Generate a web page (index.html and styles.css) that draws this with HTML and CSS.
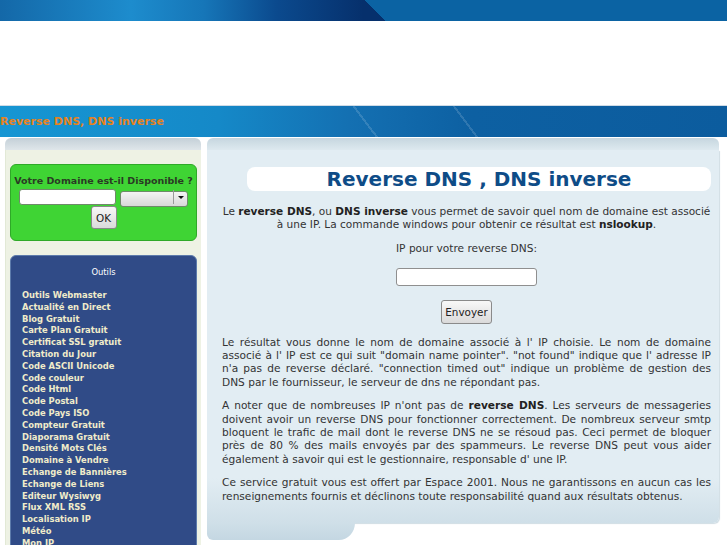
FILE: index.html
```html
<!DOCTYPE html>
<html lang="fr">
<head>
  <meta charset="UTF-8">
  <meta name="viewport" content="width=device-width, initial-scale=1.0">
  <title>Reverse DNS, DNS inverse</title>
  <link rel="stylesheet" href="styles.css">
</head>
<body>
  <div class="top-banner"></div>
  <div class="logo-area"></div>

  <div class="nav-bar">
    <h1 class="nav-title">Reverse DNS, DNS inverse</h1>
  </div>

  <div class="page">
    <!-- colonne de gauche -->
    <aside class="sidebar">
      <div class="panel-head"></div>
      <div class="sidebar-body">
        <form class="domain-box">
          <div class="domain-title">Votre Domaine est-il Disponible ?</div>
          <div class="domain-row">
            <input type="text" class="domain-input">
            <span class="select-wrap">
              <select class="domain-select"></select>
              <span class="select-arrow"></span>
            </span>
          </div>
          <div class="domain-row">
            <button type="button" class="btn btn-ok">OK</button>
          </div>
        </form>

        <div class="tools-box">
          <div class="tools-title">Outils</div>
          <ul class="tools-list">
            <li><a href="#">Outils Webmaster</a></li>
            <li><a href="#">Actualité en Direct</a></li>
            <li><a href="#">Blog Gratuit</a></li>
            <li><a href="#">Carte Plan Gratuit</a></li>
            <li><a href="#">Certificat SSL gratuit</a></li>
            <li><a href="#">Citation du Jour</a></li>
            <li><a href="#">Code ASCII Unicode</a></li>
            <li><a href="#">Code couleur</a></li>
            <li><a href="#">Code Html</a></li>
            <li><a href="#">Code Postal</a></li>
            <li><a href="#">Code Pays ISO</a></li>
            <li><a href="#">Compteur Gratuit</a></li>
            <li><a href="#">Diaporama Gratuit</a></li>
            <li><a href="#">Densité Mots Clés</a></li>
            <li><a href="#">Domaine à Vendre</a></li>
            <li><a href="#">Echange de Bannières</a></li>
            <li><a href="#">Echange de Liens</a></li>
            <li><a href="#">Editeur Wysiwyg</a></li>
            <li><a href="#">Flux XML RSS</a></li>
            <li><a href="#">Localisation IP</a></li>
            <li><a href="#">Météo</a></li>
            <li><a href="#">Mon IP</a></li>
            <li><a href="#">Ping</a></li>
            <li><a href="#">Reverse DNS</a></li>
          </ul>
        </div>
      </div>
    </aside>

    <!-- contenu principal -->
    <main class="content">
      <div class="panel-head"></div>
      <div class="content-body">
        <h2 class="page-title">Reverse DNS , DNS inverse</h2>

        <p class="center">Le <b>reverse DNS</b>, ou <b>DNS inverse</b> vous permet de savoir quel nom de domaine est associé à une IP. La commande windows pour obtenir ce résultat est <b>nslookup</b>.</p>

        <form class="dns-form">
          <p class="dns-label">IP pour votre reverse DNS:</p>
          <input type="text" class="dns-input">
          <button type="button" class="btn btn-send">Envoyer</button>
        </form>

        <p>Le résultat vous donne le nom de domaine associé à l' IP choisie. Le nom de domaine associé à l' IP est ce qui suit "domain name pointer". "not found" indique que l' adresse IP n'a pas de reverse déclaré. "connection timed out" indique un problème de gestion des DNS par le fournisseur, le serveur de dns ne répondant pas.</p>

        <p>A noter que de nombreuses IP n'ont pas de <b>reverse DNS</b>. Les serveurs de messageries doivent avoir un reverse DNS pour fonctionner correctement. De nombreux serveur smtp bloquent le trafic de mail dont le reverse DNS ne se résoud pas. Ceci permet de bloquer près de 80 % des mails envoyés par des spammeurs. Le reverse DNS peut vous aider également à savoir qui est le gestionnaire, responsable d' une IP.</p>

        <p>Ce service gratuit vous est offert par Espace 2001. Nous ne garantissons en aucun cas les renseignements fournis et déclinons toute responsabilité quand aux résultats obtenus.</p>
      </div>
      <div class="content-tab"></div>
    </main>
  </div>
</body>
</html>
```

FILE: styles.css
```css
html {
  overflow: hidden;
}

body {
  margin: 0;
  background: #fff;
  color: #333;
  font-family: "DejaVu Sans", Verdana, sans-serif;
}

/* bandeau du haut */
.top-banner {
  height: 21px;
  background:
    linear-gradient(46deg, transparent 277px, #0b63a3 277px),
    linear-gradient(90deg, #1468a8 0, #1d8ccd 18%, #1676b8 28%, #0b4a8e 38%, #06306c 50%);
}

.logo-area {
  height: 84px;
}

.nav-bar {
  display: flex;
  align-items: center;
  height: 31px;
  border-top: 1px solid #cfdbe6;
  background:
    linear-gradient(53deg, transparent 300px, rgba(255, 255, 255, 0.14) 300px, rgba(255, 255, 255, 0.14) 302px, transparent 302px),
    linear-gradient(53deg, transparent 380px, rgba(255, 255, 255, 0.14) 380px, rgba(255, 255, 255, 0.14) 382px, transparent 382px),
    linear-gradient(90deg, #1696d3 0, #1589c8 30%, #1470b2 48%, #0d60a2 65%, #0c5c9e 100%);
}

.nav-title {
  margin: 0;
  font-size: 11px;
  font-weight: bold;
  color: #e8831d;
}

.page {
  display: flex;
  gap: 6px;
  padding: 1px 0 0 5px;
}

.panel-head {
  height: 12px;
  border-radius: 6px 6px 0 0;
}

/* colonne de gauche */
.sidebar {
  width: 196px;
  flex-shrink: 0;
}

.sidebar .panel-head {
  background: linear-gradient(#c4d0d8, #dfe6ea);
}

.sidebar-body {
  padding: 14px 4px 0 5px;
  background: #eef2e4;
  border-left: 1px solid #e2e9d6;
  min-height: 500px;
}

.domain-box {
  display: flex;
  flex-direction: column;
  gap: 1px;
  margin: 0 0 0 -1px;
  padding: 9px 0 11px;
  background: #3fd434;
  border: 1px solid #2fa928;
  border-radius: 6px;
}

.domain-title {
  line-height: 14px;
  text-align: center;
  font-size: 9.5px;
  font-weight: bold;
  color: #2a3a24;
}

.domain-row {
  display: flex;
  justify-content: center;
  gap: 4px;
}

.domain-input {
  width: 97px;
  height: 16px;
  padding: 0;
  box-sizing: border-box;
  border: 1px solid #6f8a6a;
  border-radius: 3px;
  background: #fff;
}

.select-wrap {
  position: relative;
  width: 68px;
  height: 16px;
}

.domain-select {
  width: 68px;
  height: 16px;
  box-sizing: border-box;
  border: 1px solid #6f8a6a;
  border-radius: 3px;
  background: linear-gradient(#f4f4f4, #d8d8d8);
  appearance: none;
}

.select-arrow {
  position: absolute;
  top: 1px;
  right: 1px;
  width: 13px;
  height: 14px;
  border-left: 1px solid #9a9a9a;
}

.select-arrow::after {
  content: "";
  position: absolute;
  top: 6px;
  left: 4px;
  border-left: 3px solid transparent;
  border-right: 3px solid transparent;
  border-top: 3px solid #111;
}

.btn {
  padding: 0;
  border: 1px solid #8a8a8a;
  border-radius: 3px;
  background: linear-gradient(#f8f8f8, #dadada);
  color: #222;
  font-family: "DejaVu Sans", Verdana, sans-serif;
  font-size: 10.4px;
}

.btn-ok {
  width: 26px;
  height: 23px;
}

.tools-box {
  margin: 14px 0 0 -1px;
  padding: 10px 0 20px 11px;
  background: #304b87;
  border: 1px solid #5d7bab;
  border-radius: 6px;
}

.tools-title {
  line-height: 12px;
  padding-right: 11px;
  text-align: center;
  font-size: 8.4px;
  color: #fff;
}

.tools-list {
  margin: 12px 0 0;
  padding: 0;
  list-style: none;
}

.tools-list li {
  line-height: 11.8px;
  font-size: 8.4px;
  font-weight: bold;
}

.tools-list a {
  color: #f0ecca;
  text-decoration: none;
}

/* contenu principal */
.content {
  width: 512px;
  flex-shrink: 0;
}

.content .panel-head {
  background: linear-gradient(#c6d6df, #dde9ef);
}

.content-body {
  padding: 17px 8px 10px 15px;
  background: linear-gradient(#e2edf3 0, #e2edf3 88%, #cfdfe8 100%);
  border-radius: 0 0 6px 0;
  box-shadow: 1px 1px 1px #d0dde4;
  font-size: 10.6px;
  line-height: 13.3px;
  text-align: justify;
}

.content-tab {
  width: 148px;
  height: 17px;
  background: linear-gradient(#cfdfe8, #c4d7e2);
  border-radius: 0 0 16px 6px / 0 0 17px 6px;
}

.page-title {
  margin: 0 0 14px 25px;
  height: 24px;
  line-height: 24px;
  background: #fff;
  border-radius: 8px;
  text-align: center;
  font-size: 20px;
  font-weight: bold;
  color: #0e4c87;
}

.content-body p {
  margin: 0 0 10.4px;
}

.content-body b {
  color: #222;
}

.content-body .center {
  text-align: center;
  font-size: 10.55px;
}

.dns-form {
  display: flex;
  flex-direction: column;
  align-items: center;
  margin-bottom: 12.3px;
}

.content-body .dns-label {
  margin: 0 0 12.3px;
}

.dns-input {
  width: 141px;
  height: 18px;
  box-sizing: border-box;
  margin-bottom: 14px;
  border: 1px solid #8f8f8f;
  border-radius: 3px;
  background: #fff;
}

.btn-send {
  width: 51px;
  height: 24px;
}
```
